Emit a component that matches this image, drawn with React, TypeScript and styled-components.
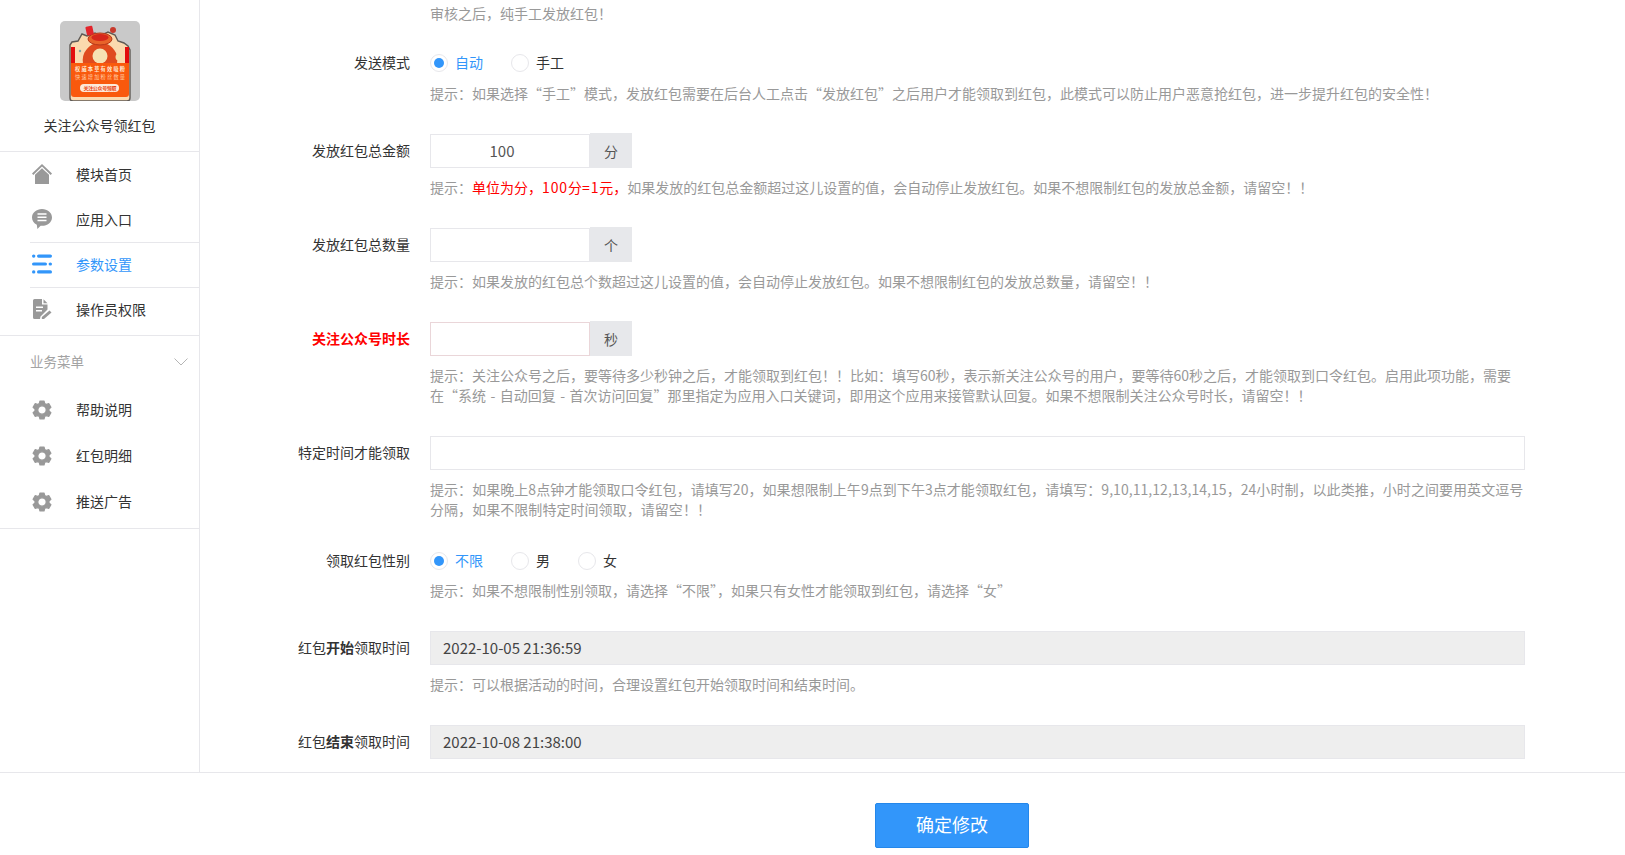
import React from "react";
import styled, { createGlobalStyle } from "styled-components";

const Global = createGlobalStyle`
  html, body { margin: 0; padding: 0; height: 100%; background: #fff; overflow: hidden; }
  body { font-family: "Noto Sans CJK SC", "Liberation Sans", sans-serif; font-size: 14px; color: #333; }
  * { box-sizing: border-box; }
`;

const Page = styled.div`
  height: 855px;
  display: flex;
  flex-direction: column;
`;
const Body = styled.div`
  flex: 1;
  min-height: 0;
  display: flex;
`;
const Sidebar = styled.aside`
  width: 200px;
  flex: none;
  border-right: 1px solid #e7e7eb;
`;
const Brand = styled.div`
  height: 152px;
  padding-top: 21px;
  border-bottom: 1px solid #e7e7eb;
  display: flex;
  flex-direction: column;
  align-items: center;
`;
const BrandName = styled.div`
  margin-top: 14px;
  line-height: 20px;
  color: #333;
`;
const Menu = styled.ul<{ $end: number }>`
  list-style: none;
  margin: 0;
  padding: 0 0 ${(p) => p.$end}px;
  border-bottom: 1px solid #e7e7eb;
`;
const MenuItem = styled.li<{ $active?: boolean; $sep?: boolean; $tall?: boolean }>`
  height: ${(p) => (p.$tall ? 46 : 45)}px;
  margin-left: 30px;
  display: flex;
  align-items: center;
  gap: 24px;
  padding-left: 2px;
  color: ${(p) => (p.$active ? "#3296fa" : "#333")};
  border-bottom: 1px solid ${(p) => (p.$sep ? "#e7e7eb" : "transparent")};
`;
const MainItem = styled(MenuItem)`
  padding-bottom: 2px;
`;
const IconBox = styled.span<{ $active?: boolean }>`
  width: 20px;
  height: 20px;
  flex: none;
  display: block;
  color: ${(p) => (p.$active ? "#3296fa" : "#999")};
  svg { display: block; width: 20px; height: 20px; }
`;
const DropIcon = styled(IconBox)`
  margin-top: 2px;
`;
const GroupHead = styled.div`
  height: 50px;
  padding: 0 11px 0 30px;
  display: flex;
  align-items: center;
  justify-content: space-between;
  color: #a3a3a3;
  font-size: 13.5px;
  svg { margin-top: 1px; }
`;
const Main = styled.main`
  flex: 1;
  min-width: 0;
  overflow: hidden;
  padding: 3px 100px 0 0;
`;
const Row = styled.div<{ $after?: number }>`
  display: grid;
  grid-template-columns: 210px 1fr;
  column-gap: 20px;
  margin-bottom: ${(p) => p.$after ?? 31}px;
`;
const Label = styled.label<{ $alert?: boolean }>`
  text-align: right;
  line-height: 32px;
  color: ${(p) => (p.$alert ? "#f00" : "#333")};
  font-weight: ${(p) => (p.$alert ? 700 : 400)};
`;
const RadioLabel = styled(Label)`
  line-height: 22px;
`;
const Field = styled.div`
  min-width: 0;
`;
const Hint = styled.div<{ $top?: number; $track?: number }>`
  margin-top: ${(p) => p.$top ?? 9}px;
  line-height: 20px;
  color: #999;
  word-spacing: 1.3px;
  letter-spacing: ${(p) => p.$track ?? 0}px;
`;
const TopHint = styled(Hint)`
  margin: 0 0 28px 230px;
`;
const Strong = styled.span`
  color: #f00;
`;
const Num = styled.span`
  letter-spacing: 0.9px;
`;
const Group = styled.div`
  display: flex;
  height: 34px;
`;
const TextInput = styled.input<{ $center?: boolean; $alert?: boolean; $short?: boolean }>`
  width: ${(p) => (p.$short ? "160px" : "100%")};
  height: 34px;
  padding: ${(p) => (p.$center ? "0 16px 2px 0" : "0 12px 1px")};
  border: 1px solid ${(p) => (p.$alert ? "#ead6d9" : "#e7e7eb")};
  outline: none;
  font: inherit;
  font-size: 15px;
  color: #555;
  text-align: ${(p) => (p.$center ? "center" : "left")};
  background: #fff;
  &[data-off] {
    background: #eee;
    color: #444;
  }
`;
const Addon = styled.span`
  width: 42px;
  margin-top: -1px;
  height: 35px;
  background: #e7e8eb;
  display: flex;
  align-items: center;
  justify-content: center;
  color: #555;
`;
const Radios = styled.div`
  display: flex;
  height: 24px;
  align-items: center;
  gap: 28px;
`;
const RadioItem = styled.span<{ $on?: boolean }>`
  display: flex;
  align-items: center;
  gap: 7px;
  line-height: 22px;
  padding-bottom: 2px;
  color: ${(p) => (p.$on ? "#3296fa" : "#333")};
`;
const Dot = styled.i<{ $on?: boolean }>`
  width: 18px;
  height: 18px;
  margin-top: 2px;
  border-radius: 50%;
  border: 1px solid #e7e7eb;
  display: flex;
  align-items: center;
  justify-content: center;
  &::after {
    content: "";
    width: 10px;
    height: 10px;
    border-radius: 50%;
    background: ${(p) => (p.$on ? "#3296fa" : "transparent")};
  }
`;
const Footer = styled.footer`
  flex: none;
  height: 83px;
  border-top: 1px solid #e7e7eb;
  padding: 30px 0 0 875px;
`;
const Submit = styled.button`
  width: 154px;
  height: 45px;
  padding: 0 0 3px;
  background: #3296fa;
  border: 1px solid #2487ea;
  border-radius: 2px;
  color: #fff;
  font: inherit;
  font-size: 18px;
`;

const Logo = () => (
  <svg width="80" height="80" viewBox="0 0 80 80">
    <rect width="80" height="80" rx="5" fill="#c9c9c9" />
    <path d="M10 42V24l2-3 6-1 4-7 5 2 8-3 5 3 8-4 7 3 3 6 6 2 4 3 2 4v48q0 3-3 3H13q-3 0-3-3Z" fill="#fbd9ae" stroke="#5f5a55" strokeWidth="1.4" />
    <rect x="11" y="26" width="4" height="17" fill="#e30d0d" />
    <rect x="65" y="26" width="4" height="17" fill="#e30d0d" />
    <path d="M23 43c-2-12 6-18 12-21h10c7 3 14 9 12 21Z" fill="#df4b1f" />
    <ellipse cx="40" cy="18" rx="12" ry="6" fill="#e8632a" stroke="#b7371a" strokeWidth="1" />
    <ellipse cx="40" cy="16.500" rx="8.500" ry="3.400" fill="#d6271b" />
    <circle cx="40" cy="35" r="7.500" fill="#f6e2b4" />
    <rect x="26" y="5" width="7" height="9" rx="1" fill="#e3242b" transform="rotate(-12 30 9)" />
    <circle cx="53" cy="9" r="3" fill="#c83a2c" />
    <circle cx="59" cy="36" r="3.500" fill="#f3e0a6" />
    <circle cx="20" cy="30" r="1.200" fill="#7fa7a0" />
    <path d="M11 42H69V73q0 3-3 3H14q-3 0-3-3Z" fill="#f9590d" />
    <text x="40" y="49.500" textAnchor="middle" fontSize="5.200" fill="#ffe9d4" fontWeight="700" textLength="50">权威本草有效吸粉</text>
    <text x="40" y="58" textAnchor="middle" fontSize="5.200" fill="#ffc9a0" textLength="50">快速增加粉丝数量</text>
    <rect x="20" y="63" width="39" height="8" rx="4" fill="#fde9da" />
    <text x="40" y="69" textAnchor="middle" fontSize="5" fill="#e8400f" fontWeight="700" textLength="33">关注公众号领取</text>
  </svg>
);

const HomeIcon = () => (
  <svg viewBox="0 0 20 20" fill="currentColor">
    <path d="M10 0 20 9.600l-1.300 1.300L10 2.600 1.300 10.900 0 9.600Z" />
    <path d="M10 4.200 17 10.800V20H3V10.800Z" />
  </svg>
);
const ChatIcon = () => (
  <svg viewBox="0 0 20 20" fill="currentColor">
    <path d="M10 0c5.500 0 10 3.700 10 8.400s-4.500 8.400-10 8.400H8.600L5.400 20l-.6-4.200C1.900 14.400 0 11.600 0 8.400 0 3.700 4.500 0 10 0Z" />
    <path d="M5.500 4.200h9v1.500h-9ZM5.500 7.500h9V9h-9ZM5.500 10.800h9v1.500h-9Z" fill="#fff" />
  </svg>
);
const ListIcon = () => (
  <svg viewBox="0 0 20 20" fill="currentColor">
    <rect x="0" y="0.500" width="3.400" height="3.200" rx="1.600" />
    <rect x="5" y="0.500" width="15" height="3.200" rx="1.600" />
    <rect x="0" y="8.400" width="15" height="3.200" rx="1.600" />
    <rect x="16.600" y="8.400" width="3.400" height="3.200" rx="1.600" />
    <rect x="0" y="16.300" width="3.400" height="3.200" rx="1.600" />
    <rect x="5" y="16.300" width="15" height="3.200" rx="1.600" />
  </svg>
);
const DocIcon = () => (
  <svg viewBox="0 0 20 20" fill="currentColor">
    <path d="M1 1.500q0-1.500 1.500-1.500H10V5.500h5.500v5L8.500 17.500 8 20H2.500Q1 20 1 18.500Z" />
    <path d="M11.500 .3 15.500 4.300H11.500Z" />
    <path d="M4 7.500h7v1.600H4ZM4 11h6v1.600H4Z" fill="#fff" />
    <path d="M17.500 11.500 19.500 13.500 12 20H9.800V18Z" />
  </svg>
);
const GearIcon = () => (
  <svg viewBox="0 0 20 20" fill="currentColor" stroke="currentColor" strokeWidth="1.200" strokeLinejoin="round">
    <path fillRule="evenodd" d="M8 1h4l.7 2.500 1.600.9 2.600-.7 2 3.500-1.900 1.800v2l1.900 1.800-2 3.500-2.600-.7-1.600.9L12 19H8l-.7-2.500-1.600-.9-2.600.7-2-3.500 1.900-1.800V9L1.100 7.200l2-3.500 2.600.7 1.600-.9ZM10 5.800a4.200 4.200 0 1 0 0 8.400 4.200 4.200 0 0 0 0-8.400Z" />
  </svg>
);
const Chevron = () => (
  <svg width="14" height="8" viewBox="0 0 14 8" fill="none" stroke="#b5b5b5" strokeWidth="1">
    <path d="M.5.500 7 7 13.500.500" />
  </svg>
);

type Entry = { name: string; icon: React.ReactNode; active?: boolean; sep?: boolean };
const mainMenu: Entry[] = [
  { name: "模块首页", icon: <HomeIcon /> },
  { name: "应用入口", icon: <ChatIcon />, sep: true },
  { name: "参数设置", icon: <ListIcon />, active: true, sep: true },
  { name: "操作员权限", icon: <DocIcon /> },
];
const bizMenu = ["帮助说明", "红包明细", "推送广告"];

const RadioSet = ({ options }: { options: string[] }) => (
  <Radios>
    {options.map((o, i) => (
      <RadioItem key={o} $on={i === 0}>
        <Dot $on={i === 0} />
        {o}
      </RadioItem>
    ))}
  </Radios>
);

export default function App() {
  return (
    <Page>
      <Global />
      <Body>
        <Sidebar>
          <Brand>
            <Logo />
            <BrandName>关注公众号领红包</BrandName>
          </Brand>
          <Menu $end={2}>
            {mainMenu.map((it, i) => (
              <MainItem key={it.name} $active={it.active} $sep={it.sep} $tall={i === 0}>
                <IconBox $active={it.active}>{it.icon}</IconBox>
                {it.name}
              </MainItem>
            ))}
          </Menu>
          <GroupHead>
            业务菜单
            <Chevron />
          </GroupHead>
          <Menu $end={4}>
            {bizMenu.map((name) => (
              <MenuItem key={name} $tall>
                <DropIcon>
                  <GearIcon />
                </DropIcon>
                {name}
              </MenuItem>
            ))}
          </Menu>
        </Sidebar>
        <Main>
          <TopHint>审核之后，纯手工发放红包！</TopHint>
          <Row>
            <RadioLabel>发送模式</RadioLabel>
            <Field>
              <RadioSet options={["自动", "手工"]} />
              <Hint $top={8}>提示：如果选择“手工”模式，发放红包需要在后台人工点击“发放红包”之后用户才能领取到红包，此模式可以防止用户恶意抢红包，进一步提升红包的安全性！</Hint>
            </Field>
          </Row>
          <Row>
            <Label>发放红包总金额</Label>
            <Field>
              <Group>
                <TextInput $short $center readOnly value="100" />
                <Addon>分</Addon>
              </Group>
              <Hint>提示：<Strong>单位为分，<Num>100</Num>分<Num>=1</Num>元，</Strong>如果发放的红包总金额超过这儿设置的值，会自动停止发放红包。如果不想限制红包的发放总金额，请留空！！</Hint>
            </Field>
          </Row>
          <Row>
            <Label>发放红包总数量</Label>
            <Field>
              <Group>
                <TextInput $short readOnly value="" />
                <Addon>个</Addon>
              </Group>
              <Hint>提示：如果发放的红包总个数超过这儿设置的值，会自动停止发放红包。如果不想限制红包的发放总数量，请留空！！</Hint>
            </Field>
          </Row>
          <Row>
            <Label $alert>关注公众号时长</Label>
            <Field>
              <Group>
                <TextInput $short $alert readOnly value="" />
                <Addon>秒</Addon>
              </Group>
              <Hint>提示：关注公众号之后，要等待多少秒钟之后，才能领取到红包！！比如：填写60秒，表示新关注公众号的用户，要等待60秒之后，才能领取到口令红包。启用此项功能，需要在“系统 - 自动回复 - 首次访问回复”那里指定为应用入口关键词，即用这个应用来接管默认回复。如果不想限制关注公众号时长，请留空！！</Hint>
            </Field>
          </Row>
          <Row $after={30}>
            <Label>特定时间才能领取</Label>
            <Field>
              <TextInput readOnly value="" />
              <Hint $track={0.05}>提示：如果晚上8点钟才能领取口令红包，请填写20，如果想限制上午9点到下午3点才能领取红包，请填写：9,10,11,12,13,14,15，24小时制，以此类推，小时之间要用英文逗号分隔，如果不限制特定时间领取，请留空！！</Hint>
            </Field>
          </Row>
          <Row>
            <RadioLabel>领取红包性别</RadioLabel>
            <Field>
              <RadioSet options={["不限", "男", "女"]} />
              <Hint $top={7}>提示：如果不想限制性别领取，请选择“不限”，如果只有女性才能领取到红包，请选择“女”</Hint>
            </Field>
          </Row>
          <Row>
            <Label>红包<b>开始</b>领取时间</Label>
            <Field>
              <TextInput data-off readOnly value="2022-10-05 21:36:59" />
              <Hint>提示：可以根据活动的时间，合理设置红包开始领取时间和结束时间。</Hint>
            </Field>
          </Row>
          <Row>
            <Label>红包<b>结束</b>领取时间</Label>
            <Field>
              <TextInput data-off readOnly value="2022-10-08 21:38:00" />
            </Field>
          </Row>
        </Main>
      </Body>
      <Footer>
        <Submit>确定修改</Submit>
      </Footer>
    </Page>
  );
}
